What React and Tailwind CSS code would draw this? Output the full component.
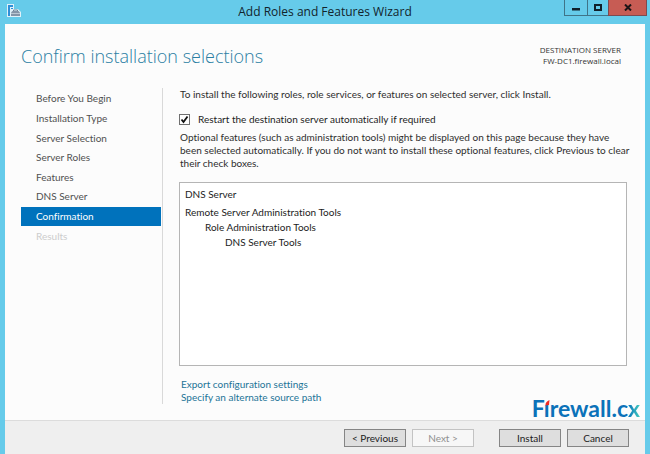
const steps = [
  { label: "Before You Begin" },
  { label: "Installation Type" },
  { label: "Server Selection" },
  { label: "Server Roles" },
  { label: "Features" },
  { label: "DNS Server" },
  { label: "Confirmation", current: true },
  { label: "Results", disabled: true },
];

function ServerIcon() {
  return (
    <svg viewBox="0 0 14 14" className="h-[14px] w-[14px]" aria-hidden="true">
      <path d="M0 0h7v5h4l3 3v5H0z" fill="#dff1f9" />
      <path d="M1 1h5v2H1zM1 3h2v9H1zM4 4h2v1H4z" fill="#2f8fd8" />
      <path d="M6.500 7.500V6h4v1.500" fill="none" stroke="#6f8194" />
      <path d="M4 8.500L5.500 7h6L13 8.500V12H4z" fill="#8495a8" />
      <path d="M4 9.500h9" stroke="#c9d4de" strokeWidth="0.800" />
    </svg>
  );
}

function TitleBar() {
  return (
    <header className="grid h-6 grid-cols-[1fr_auto_1fr] items-start">
      <div className="pt-1 pl-[5px]">
        <ServerIcon />
      </div>
      <h1 className="font-['Open_Sans',sans-serif] text-[12px] leading-[23px] text-[#12242c]">
        Add Roles and Features Wizard
      </h1>
      <div className="mr-px flex h-4 justify-end">
        <button aria-label="Minimize" className="flex w-6 items-center justify-center border border-t-0 border-[#3f7488]">
          <svg viewBox="0 0 8 7" className="h-[7px] w-2">
            <path d="M0 4h8v2.500H0z" fill="#10202a" />
          </svg>
        </button>
        <button aria-label="Maximize" className="flex w-5 items-center justify-center border-b border-[#3f7488]">
          <svg viewBox="0 0 8 7" className="h-[7px] w-2">
            <path d="M1 1h6v5H1z" fill="none" stroke="#10202a" strokeWidth="2" />
          </svg>
        </button>
        <button
          aria-label="Close"
          className="flex w-[39px] items-center justify-center border border-t-0 border-[#7d4a50] bg-[#c75c54]"
        >
          <svg viewBox="0 0 8 7" className="h-[7px] w-2">
            <path d="M1 0.500l6 6M7 0.500l-6 6" stroke="#1c1416" strokeWidth="2" />
          </svg>
        </button>
      </div>
    </header>
  );
}

function Steps() {
  return (
    <nav className="mt-px grid h-[157px] grid-rows-8">
      {steps.map((step) => (
        <button
          key={step.label}
          disabled={step.disabled}
          aria-current={step.current ? "step" : undefined}
          className={`flex items-center pl-[15px] text-left ${
            step.current ? "bg-[#0072bc] text-white" : step.disabled ? "text-[#cccccc]" : "text-[#505050]"
          }`}
        >
          {step.label}
        </button>
      ))}
    </nav>
  );
}

function Brand() {
  return (
    <div className="-mr-[13px] text-[23px] leading-6 font-bold text-[#0b72b9]">
      F
      <span className="relative">
        ı
        <svg viewBox="0 0 5 6" className="absolute top-[6px] left-px h-[6px] w-[5px]" aria-hidden="true">
          <path d="M0.500 5.500C0 3 2 1 4.500 0L4 5z" fill="#ee2c24" />
        </svg>
      </span>
      rewall.c<span className="bg-linear-to-r from-[#0b72b9] to-[#45cdbd] bg-clip-text text-transparent">x</span>
    </div>
  );
}

export default function App() {
  const button = "h-[18px] w-[62px] border border-[#858585] bg-[#dedede] text-center leading-4 text-[#1c1c1c]";

  return (
    <div className="flex min-h-screen flex-col bg-[#66cbea] px-[5px] font-['Lato','Open_Sans',sans-serif] text-[10px] leading-[13px] [font-variant-ligatures:none]">
      <div className="-mx-[5px] px-[2px]">
        <TitleBar />
      </div>

      <main className="flex flex-1 flex-col bg-[#fcfcfc]">
        <div className="flex items-start justify-between pt-5 pr-6 pl-4">
          <h2 className="font-['Open_Sans',sans-serif] text-[18px] leading-6 font-light text-[#2a7ea3]">
            Confirm installation selections
          </h2>
          <p className="text-right font-['Open_Sans',sans-serif] text-[8px] leading-[11px] text-[#333]">
            DESTINATION SERVER
            <br />
            FW-DC1.firewall.local
          </p>
        </div>

        <div className="mt-5 flex flex-1">
          <div className="mb-4 ml-4 w-[142px] shrink-0 border-r border-[#d9d9d9] pr-px">
            <Steps />
          </div>

          <div className="flex flex-1 flex-col pr-[18px] pl-4 text-[#2e2e2e]">
            <p className="pl-px">
              To install the following roles, role services, or features on selected server, click Install.
            </p>
            <label className="mt-3 flex items-center gap-2 text-[#1c1c1c]">
              <span className="relative flex h-[11px] w-[11px]">
                <input
                  type="checkbox"
                  defaultChecked
                  className="peer h-[11px] w-[11px] appearance-none border border-[#707070] bg-white"
                />
                <svg
                  viewBox="0 0 11 11"
                  className="pointer-events-none absolute inset-0 hidden peer-checked:block"
                  aria-hidden="true"
                >
                  <path d="M2.500 5.500l2 2.500 4-5.500" fill="none" stroke="#111" strokeWidth="1.800" />
                </svg>
              </span>
              Restart the destination server automatically if required
            </label>
            <p className="mt-[5px] -mr-3 pl-px">
              Optional features (such as administration tools) might be displayed on this page because they have
              <br />
              been selected automatically. If you do not want to install these optional features, click Previous to clear
              <br />
              their check boxes.
            </p>

            <div className="mt-3 flex-1 border border-[#b5b5b5] bg-white px-[5px] pt-1 leading-[15px] text-[#1c1c1c]">
              <p className="mb-[3px]">DNS Server</p>
              <p>Remote Server Administration Tools</p>
              <p className="pl-5">Role Administration Tools</p>
              <p className="pl-10">DNS Server Tools</p>
            </div>

            <div className="mt-3 flex items-end justify-between">
              <div className="mb-4 flex flex-col items-start pl-[2px] text-[#1c7497]">
                <a href="#export">Export configuration settings</a>
                <a href="#source">Specify an alternate source path</a>
              </div>
              <Brand />
            </div>
          </div>
        </div>
      </main>

      <footer className="flex h-[34px] justify-end border-t border-[#dcdcdc] bg-[#efefef] pt-2 pr-4">
        <button className={button}>&lt; Previous</button>
        <button
          disabled
          className="ml-[6px] h-[18px] w-[62px] border border-[#c3c3c3] bg-[#f7f7f7] text-center leading-4 text-[#909090]"
        >
          Next &gt;
        </button>
        <button className={`ml-[25px] ${button}`}>Install</button>
        <button className={`ml-[6px] ${button}`}>Cancel</button>
      </footer>
    </div>
  );
}
